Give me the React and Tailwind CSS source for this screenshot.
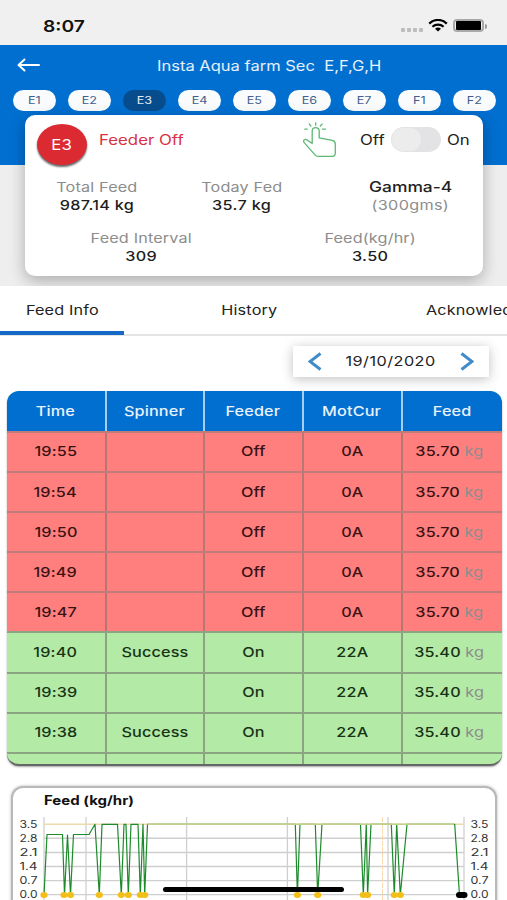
import { clsx } from "clsx";

const feeders = ["E1", "E2", "E3", "E4", "E5", "E6", "E7", "F1", "F2"];

const columns = ["Time", "Spinner", "Feeder", "MotCur", "Feed"];

const rows = [
  { time: "19:55", spinner: "", feeder: "Off", motCur: "0A", feed: "35.70" },
  { time: "19:54", spinner: "", feeder: "Off", motCur: "0A", feed: "35.70" },
  { time: "19:50", spinner: "", feeder: "Off", motCur: "0A", feed: "35.70" },
  { time: "19:49", spinner: "", feeder: "Off", motCur: "0A", feed: "35.70" },
  { time: "19:47", spinner: "", feeder: "Off", motCur: "0A", feed: "35.70" },
  { time: "19:40", spinner: "Success", feeder: "On", motCur: "22A", feed: "35.40" },
  { time: "19:39", spinner: "", feeder: "On", motCur: "22A", feed: "35.40" },
  { time: "19:38", spinner: "Success", feeder: "On", motCur: "22A", feed: "35.40" },
];

const ticks = [
  { label: "3.5", y: 824.3 },
  { label: "2.8", y: 838.3 },
  { label: "2.1", y: 852.5 },
  { label: "1.4", y: 866.5 },
  { label: "0.7", y: 880.6 },
  { label: "0.0", y: 894.6 },
];

const feedLine =
  "44,895 47,834.5 62.5,834.5 64.5,895 67.5,835 70.5,895 73.5,834.5 89,834.5 95,824.3 99.3,895 102,824.3 117.5,824.3 121.3,895 124,824.3 126,824.3 128.3,895 131,824.3 138,824.3 140.3,895 143,824.3 144.7,895 147.5,824.3 295.3,824.3 297.4,895 300,824.3 315.3,824.3 317.7,895 322,824.3 360.5,824.3 363.3,895 366.3,824.3 367.6,895 371,824.3 391.3,824.3 394.3,895 396.7,824.3 400.3,895 407,824.3 454.7,824.3 459.5,895";

const stops = [44, 64, 70.5, 99.3, 121.3, 128.3, 140.3, 144.7, 297.4, 317.7, 363.3, 367.6, 394.3, 400.3];

// wide lettering, the glyphs are stretched horizontally
function Wide({ children, className }) {
  return (
    <span className={clsx("inline-block whitespace-pre scale-x-[1.2]", className)}>
      {children}
    </span>
  );
}

function StatusBar() {
  return (
    <div className="h-[45px] bg-[#f0f0f0] flex items-center justify-between pl-[43px] pr-[20px] pt-[7px]">
      <Wide className="origin-left text-base font-semibold text-[#111]">8:07</Wide>
      <div className="flex items-center">
        <div className="flex gap-[2px] mt-[8px] mr-[5px]">
          {[0, 1, 2, 3].map((i) => (
            <span key={i} className="size-[4px] rounded-[1px] bg-[#bdbdbd]" />
          ))}
        </div>
        <svg className="-mt-[2px]" width="20" height="13" viewBox="0 0 20 13" fill="none" stroke="#000" strokeWidth="2.2">
          <path d="M1.2 4.6C6.2-.3 13.8-.3 18.8 4.6" />
          <path d="M4.4 7.7C7.6 4.8 12.4 4.8 15.6 7.7" />
          <path d="M7 9.7c1.8-1.5 4.2-1.5 6 0L10 12.6z" fill="#000" stroke="none" />
        </svg>
        <div className="-mt-px ml-[5px] w-[31px] h-[13px] rounded-[4px] border-2 border-[#a9a9a9]">
          <div className="h-full mx-px rounded-[1px] bg-black" />
        </div>
        <span className="ml-[1px] w-[2px] h-[5px] rounded-r-full bg-[#9a9a9a]" />
      </div>
    </div>
  );
}

function Header() {
  return (
    <div className="h-[120px] bg-[#006fd0]">
      <div className="h-[41px] flex items-center">
        <svg className="ml-[17px] -mt-[2px]" width="24" height="14" viewBox="0 0 24 14" fill="none" stroke="#fff" strokeWidth="2" strokeLinecap="round" strokeLinejoin="round">
          <path d="M22 7H2M7.5 1.5 1.5 7l6 5.5" />
        </svg>
        <div className="ml-[116px] text-[14px] text-white/90 leading-none">
          <Wide className="origin-left scale-x-[1.18]!">Insta Aqua farm Sec  E,F,G,H</Wide>
        </div>
      </div>
      <div className="flex gap-[12px] mt-[4px] pl-[13px]">
        {feeders.map((name) => (
          <div
            key={name}
            className={clsx(
              "w-[43px] h-[21px] shrink-0 rounded-full flex items-center justify-center text-[10.5px]",
              name === "E3" ? "bg-[#074d8e] text-[#e4edf6]" : "bg-[#fafbfd] text-[#405f8c]"
            )}
          >
            <Wide>{name}</Wide>
          </div>
        ))}
      </div>
    </div>
  );
}

function Stat({ label, value, className }) {
  return (
    <div className={clsx("flex flex-col items-center leading-[18px]", className)}>
      <Wide className="text-[13.5px] tracking-[0.01em] text-[#8d8d8d]">{label}</Wide>
      <Wide className="text-[13.5px] tracking-[0.02em] font-[450] text-[#1d1d1d]">{value}</Wide>
    </div>
  );
}

function FeederCard() {
  return (
    <div className="relative -mt-[50px] mx-[25px] h-[161px] w-[458px] rounded-[10px] bg-white shadow-[0_5px_16px_rgba(0,0,0,0.28)]">
      <div className="flex items-start">
        <div className="mt-[9px] ml-[12px] w-[50px] h-[41px] rounded-[50%] bg-[#dc2a33] shadow-[0_2px_2px_rgba(0,0,0,0.6)] flex items-center justify-center text-[14px] text-white">
          <Wide>E3</Wide>
        </div>
        <div className="ml-[12px] mt-[16px] w-[204px] text-[14px] leading-[18px] text-[#d9303f]">
          <Wide className="origin-left">Feeder Off</Wide>
        </div>
        <svg className="mt-[7px]" width="34" height="36" viewBox="0 0 34 36" fill="none" stroke="#5cb874" strokeWidth="1.3" strokeLinecap="round" strokeLinejoin="round">
          <path d="M9.2 21.5V9c0-4.6 7-4.6 7 0v6.8l13 2.6c2.1.5 3.1 1.8 3.1 3.8V31c0 2.2-1.2 3.3-3.2 3.3H15c-1.4 0-2.2-.5-3-1.4L1.2 20.6c-1.6-2.4.5-3.9 2.6-2.8z" />
          <path d="M12.7 3.2V.8M7.9 4 6.2 1.9M17.4 4l1.8-2.1M4.2 7.2H1.8M19.4 7.2h3" />
        </svg>
        <div className="flex items-center ml-[23px] mt-[12px] text-[14px] text-[#222]">
          <Wide className="origin-left w-[26px]">Off</Wide>
          <div className="w-[50px] h-[25px] rounded-full bg-[#e3e3e5] ml-[5px]">
            <div className="w-[29px] h-[23px] mt-[1px] ml-[1px] rounded-full bg-[#ececec]" />
          </div>
          <Wide className="origin-left ml-[6px]">On</Wide>
        </div>
      </div>
      <div className="flex mt-[13px]">
        <Stat className="w-[144px] shrink-0" label="Total Feed" value="987.14 kg" />
        <Stat className="w-[145px] shrink-0" label="Today Fed" value="35.7 kg" />
        <div className="grow pl-[24px] flex flex-col items-center leading-[18px]">
          <Wide className="text-[14.5px] text-[#222] font-medium">Gamma-4</Wide>
          <Wide className="text-[13.5px] tracking-[0.02em] text-[#8d8d8d]">(300gms)</Wide>
        </div>
      </div>
      <div className="flex mt-[15px]">
        <Stat className="w-[233px]" label="Feed Interval" value="309" />
        <Stat className="w-[225px]" label="Feed(kg/hr)" value="3.50" />
      </div>
    </div>
  );
}

function Tabs() {
  return (
    <div className="relative h-[50px] bg-white border-b-2 border-[#e4e4e4] text-[13.5px] tracking-[0.01em] text-[#222] flex leading-[48px]">
      <div className="w-[124px] h-[49px] shrink-0 text-center border-b-4 border-[#1469c7]">
        <Wide>Feed Info</Wide>
      </div>
      <div className="w-[251px] shrink-0 text-center">
        <Wide>History</Wide>
      </div>
      <div className="pl-[51px] shrink-0">
        <Wide className="origin-left">Acknowledgement</Wide>
      </div>
    </div>
  );
}

function DatePicker() {
  return (
    <div className="flex items-center justify-between ml-[293px] mt-[10px] w-[196px] h-[31px] px-[15px] bg-white shadow-[0_2px_12px_rgba(0,0,0,0.25)]">
      <svg width="14" height="19" viewBox="0 0 14 19" fill="none" stroke="#408bc9" strokeWidth="3">
        <path d="M12.5 1.5 2 9.5l10.5 8" />
      </svg>
      <Wide className="text-[13.5px] tracking-[0.03em] text-[#222]">19/10/2020</Wide>
      <svg width="14" height="19" viewBox="0 0 14 19" fill="none" stroke="#408bc9" strokeWidth="3">
        <path d="M1.5 1.5 12 9.5l-10.5 8" />
      </svg>
    </div>
  );
}

function FeedTable() {
  const cell = "flex items-center justify-center border-r-2 last:border-r-0";
  return (
    <div className="mx-[6.5px] mt-[14px] w-[495px] h-[375px] rounded-[12px] overflow-hidden border-b-2 border-[#666] bg-[#b3eaa6] text-[13.5px] tracking-[0.01em] flex flex-col shadow-[0_1px_2px_rgba(0,0,0,0.35)]">
      <div className="grid grid-cols-[100px_98px_99px_99px_99px] h-[40px] shrink-0 bg-[#006fd0] text-[#e9f2fa]">
        {columns.map((name) => (
          <div key={name} className={clsx(cell, "border-[#a9cdee]")}>
            <Wide className="font-[450]">{name}</Wide>
          </div>
        ))}
      </div>
      {rows.map((row) => (
        <div
          key={row.time}
          className={clsx(
            "grid grid-cols-[100px_98px_99px_99px_99px] h-[40.1px] shrink-0 border-t-2",
            row.feeder === "On"
              ? "bg-[#b3eaa6] border-[#8ba583] text-[#183316]"
              : "bg-[#ff7f7f] border-[#c07b79] text-[#3a1212]"
          )}
        >
          {[row.time, row.spinner, row.feeder, row.motCur].map((value, i) => (
            <div key={i} className={clsx(cell, "pb-px", row.feeder === "On" ? "border-[#8ba583]" : "border-[#b87674]")}>
              <Wide className="font-[450]">{value}</Wide>
            </div>
          ))}
          <div className="flex items-center justify-center pb-px pr-[5px]">
            <Wide className="font-[450]">
              {row.feed} <span className="font-normal text-[#8d8d8d]">kg</span>
            </Wide>
          </div>
        </div>
      ))}
      <div className="grid grid-cols-[100px_98px_99px_99px_99px] grow border-t-2 border-[#8ba583]">
        {columns.map((name) => (
          <div key={name} className={clsx(cell, "border-[#8ba583]")} />
        ))}
      </div>
    </div>
  );
}

function FeedChart() {
  return (
    <div className="mt-[20px] ml-[11px] w-[486px] h-[140px] rounded-[12px] border-2 border-[#b9b9b9] bg-white shadow-[0_0_3px_rgba(0,0,0,0.3)]">
      <div className="h-[25px] pl-[31px] pt-[3px] text-[12.5px] leading-[20px] font-bold text-[#111]">
        <Wide className="origin-left">Feed (kg/hr)</Wide>
      </div>
      <svg width="482" height="87" viewBox="13 813 482 87">
        {[44, 86, 186.6, 287.4, 388, 464].map((x) => (
          <path key={x} d={`M${x} 817V900`} stroke="#cfcfcf" strokeWidth="1.3" />
        ))}
        {ticks.map((t) => (
          <g key={t.label}>
            <path d={`M44 ${t.y}H464`} stroke={t.label === "3.5" ? "#ecd9ae" : "#cfcfcf"} strokeWidth="1.4" />
            <text x="19.5" y={t.y + 3.2} fontSize="10.5" fill="#333" textLength="18" lengthAdjust="spacingAndGlyphs">
              {t.label}
            </text>
            <text x="470.5" y={t.y + 3.2} fontSize="10.5" fill="#333" textLength="18" lengthAdjust="spacingAndGlyphs">
              {t.label}
            </text>
          </g>
        ))}
        <path d="M382.5 817V900" stroke="#fbd9ae" strokeWidth="1" strokeDasharray="5 1" />
        <polyline points={feedLine} fill="none" stroke="#1d8a2b" strokeWidth="1.2" strokeLinejoin="round" />
        <path d="M147.5 824.3H454" stroke="#c3cf8c" strokeWidth="1.4" />
        {stops.map((x) => (
          <ellipse key={x} cx={x} cy="895" rx="3.6" ry="3" fill="#f2be18" />
        ))}
        <path d="M459 895H464.5" stroke="#000" strokeWidth="6" strokeLinecap="round" />
      </svg>
    </div>
  );
}

export default function App() {
  return (
    <div className="relative w-[507px] h-[900px] overflow-hidden bg-white font-['Inter',sans-serif]">
      <StatusBar />
      <div className="h-[241px] bg-[#eeeeee] overflow-hidden">
        <Header />
        <FeederCard />
      </div>
      <Tabs />
      <DatePicker />
      <FeedTable />
      <FeedChart />
      {/* home indicator */}
      <div className="absolute left-[163px] top-[887px] w-[181px] h-[5px] rounded-full bg-black" />
    </div>
  );
}
